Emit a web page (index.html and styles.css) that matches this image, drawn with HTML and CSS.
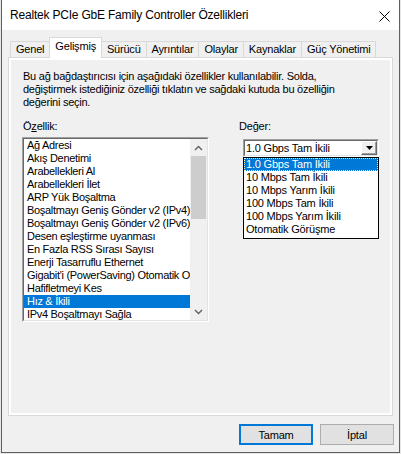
FILE: index.html
```html
<!DOCTYPE html>
<html lang="tr">
<head>
<meta charset="utf-8">
<title>Realtek PCIe GbE Family Controller Özellikleri</title>
<link rel="stylesheet" href="styles.css">
</head>
<body>
<div class="window">
  <div class="titlebar">
    <span class="title">Realtek PCIe GbE Family Controller Özellikleri</span>
    <svg class="close" width="11" height="11" viewBox="0 0 11 11" aria-hidden="true">
      <path d="M0.5 0.5 L10.5 10.5 M10.5 0.5 L0.5 10.5" stroke="#000" stroke-width="1" fill="none"/>
    </svg>
  </div>
  <div class="client">
    <div class="tabs">
      <div class="tab">Genel</div>
      <div class="tab active">Gelişmiş</div>
      <div class="tab">Sürücü</div>
      <div class="tab">Ayrıntılar</div>
      <div class="tab">Olaylar</div>
      <div class="tab">Kaynaklar</div>
      <div class="tab">Güç Yönetimi</div>
    </div>
    <div class="panel">
      <div class="page">
        <p class="intro">Bu ağ bağdaştırıcısı için aşağıdaki özellikler kullanılabilir. Solda,<br>değiştirmek istediğiniz özelliği tıklatın ve sağdaki kutuda bu özelliğin<br>değerini seçin.</p>
        <div class="fields">
          <div class="field field-prop">
            <label class="field-label">Ö<u>z</u>ellik:</label>
            <div class="listbox">
              <div class="listbox-inner">
                <ul class="list">
                  <li>Ağ Adresi</li>
                  <li>Akış Denetimi</li>
                  <li>Arabellekleri Al</li>
                  <li>Arabellekleri İlet</li>
                  <li>ARP Yük Boşaltma</li>
                  <li>Boşaltmayı Geniş Gönder v2 (IPv4)</li>
                  <li>Boşaltmayı Geniş Gönder v2 (IPv6)</li>
                  <li>Desen eşleştirme uyanması</li>
                  <li>En Fazla RSS Sırası Sayısı</li>
                  <li>Enerji Tasarruflu Ethernet</li>
                  <li>Gigabit'i (PowerSaving) Otomatik Olarak Devre Dışı Bırak</li>
                  <li>Hafifletmeyi Kes</li>
                  <li class="selected">Hız &amp; İkili</li>
                  <li>IPv4 Boşaltmayı Sağla</li>
                </ul>
                <div class="scrollbar">
                  <div class="sb-btn">
                    <svg width="9" height="6" viewBox="0 0 9 6"><polyline points="1,5 4.5,1.5 8,5" fill="none" stroke="#606060" stroke-width="1.4"/></svg>
                  </div>
                  <div class="sb-track"><div class="sb-thumb"></div></div>
                  <div class="sb-btn">
                    <svg width="9" height="6" viewBox="0 0 9 6"><polyline points="1,1 4.5,4.5 8,1" fill="none" stroke="#606060" stroke-width="1.4"/></svg>
                  </div>
                </div>
              </div>
            </div>
          </div>
          <div class="field field-value">
            <label class="field-label">De<u>ğ</u>er:</label>
            <div class="combo">
              <div class="combo-inner">
                <span class="combo-text">1.0 Gbps Tam İkili</span>
                <span class="combo-btn">
                  <svg width="7" height="4" viewBox="0 0 7 4"><polygon points="0,0 7,0 3.5,4" fill="#000"/></svg>
                </span>
              </div>
            </div>
            <ul class="dropdown">
              <li class="selected"><span class="focus">1.0 Gbps Tam İkili</span></li>
              <li>10 Mbps Tam İkili</li>
              <li>10 Mbps Yarım İkili</li>
              <li>100 Mbps Tam İkili</li>
              <li>100 Mbps Yarım İkili</li>
              <li>Otomatik Görüşme</li>
            </ul>
          </div>
        </div>
      </div>
    </div>
    <div class="buttons">
      <button class="btn btn-default">Tamam</button>
      <button class="btn">İptal</button>
    </div>
  </div>
</div>
</body>
</html>
```

FILE: styles.css
```css
* {
  box-sizing: border-box;
}

html,
body {
  margin: 0;
  padding: 0;
}

body {
  width: 401px;
  height: 454px;
  overflow: hidden;
  background: #e6e6e6;
  font-family: "Liberation Sans", Arial, sans-serif;
  font-size: 11px;
  letter-spacing: -0.2px;
  color: #000;
}

/* dialog frame */
.window {
  margin-left: 1px;
  width: 399px;
  height: 453px;
  border: 1px solid #5f5f5f;
  border-top: none;
  background: #f0f0f0;
  display: flex;
  flex-direction: column;
}

.titlebar {
  height: 30px;
  flex: none;
  background: #fff;
  display: flex;
  align-items: flex-start;
  padding-left: 8px;
}

.title {
  margin-top: 7px;
  font-size: 12px;
  line-height: 16px;
  letter-spacing: -0.2px;
  color: #000;
}

.close {
  margin-left: auto;
  margin-right: 9px;
  margin-top: 11px;
}

.client {
  flex: 1;
  padding: 7px 6px 0;
  display: flex;
  flex-direction: column;
}

/* tab strip */
.tabs {
  display: flex;
  align-items: flex-end;
  height: 20px;
  margin-left: 2px;
}

.tab {
  height: 16px;
  padding: 1px 5px 0;
  line-height: 13px;
  border: 1px solid #d9d9d9;
  border-bottom: none;
  margin-right: -1px;
  background: #f0f0f0;
  white-space: nowrap;
}

.tab.active {
  position: relative;
  z-index: 1;
  height: 21px;
  margin-bottom: -1px;
  padding-top: 2px;
  background: #fff;
}

.panel {
  height: 359px;
  flex: none;
  border: 1px solid #d9d9d9;
  background: #fff;
  padding: 2px;
}

.page {
  height: 100%;
  background: #f0f0f0;
  padding: 10px 11px 0 12px;
}

.intro {
  margin: 0;
  line-height: 13px;
  letter-spacing: -0.25px;
  white-space: nowrap;
}

.fields {
  display: flex;
  margin-top: 11px;
}

.field-label {
  display: block;
  height: 13px;
  line-height: 13px;
}

.field-prop {
  width: 186px;
}

.field-value {
  position: relative;
  margin-left: 30px;
}

/* sunken 3D edge shared by list and combo */
.listbox,
.combo {
  border: 1px solid;
  border-color: #a0a0a0 #fff #fff #a0a0a0;
}

.listbox-inner,
.combo-inner {
  height: 100%;
  border: 1px solid;
  border-color: #696969 #e3e3e3 #e3e3e3 #696969;
  background: #fff;
  display: flex;
}

.listbox {
  margin-top: 4px;
  margin-left: -1px;
  width: 187px;
  height: 185px;
}

.list {
  flex: 1;
  min-width: 0;
  margin: 0;
  padding: 0;
  list-style: none;
  overflow: hidden;
}

.list li {
  height: 13px;
  line-height: 13px;
  padding-left: 3px;
  letter-spacing: -0.3px;
  white-space: nowrap;
  overflow: hidden;
}

.list li.selected,
.dropdown li.selected {
  background: #0078d7;
  color: #fff;
}

.scrollbar {
  width: 17px;
  flex: none;
  background: #f0f0f0;
  display: flex;
  flex-direction: column;
}

.sb-btn {
  height: 17px;
  display: flex;
  align-items: center;
  justify-content: center;
}

.sb-track {
  flex: 1;
  padding: 0 1px;
}

.sb-thumb {
  height: 63px;
  background: #cdcdcd;
}

/* drop-down list box */
.combo {
  margin-top: 6px;
  margin-left: 4px;
  width: 136px;
  height: 18px;
}

.combo-inner {
  align-items: stretch;
}

.combo-text {
  flex: 1;
  padding-left: 1px;
  line-height: 14px;
  white-space: nowrap;
}

.combo-btn {
  width: 16px;
  flex: none;
  border: 1px solid;
  border-color: #fff #696969 #696969 #fff;
  box-shadow: inset -1px -1px 0 #a0a0a0;
  background: #f0f0f0;
  display: flex;
  align-items: center;
  justify-content: center;
}

.dropdown {
  position: absolute;
  top: 37px;
  left: 4px;
  width: 136px;
  margin: 0;
  padding: 0;
  list-style: none;
  background: #fff;
  border: 1px solid #000;
  z-index: 2;
}

.dropdown li {
  height: 13px;
  line-height: 13px;
  padding-left: 2px;
  white-space: nowrap;
}

.dropdown li:last-child {
  height: 15px;
}

.dropdown li.selected {
  padding-left: 0;
}

.focus {
  display: block;
  height: 13px;
  line-height: 11px;
  padding-left: 1px;
  border: 1px dotted #ffe8a0;
}

/* command buttons */
.buttons {
  display: flex;
  justify-content: flex-end;
  gap: 7px;
  margin-top: 8px;
  margin-right: -1px;
}

.btn {
  width: 74px;
  height: 21px;
  padding: 0;
  font-family: "Liberation Sans", Arial, sans-serif;
  font-size: 11px;
  letter-spacing: -0.2px;
  color: #000;
  background: #e1e1e1;
  border: 1px solid #adadad;
}

.btn-default {
  border: 2px solid #0078d7;
}
```
